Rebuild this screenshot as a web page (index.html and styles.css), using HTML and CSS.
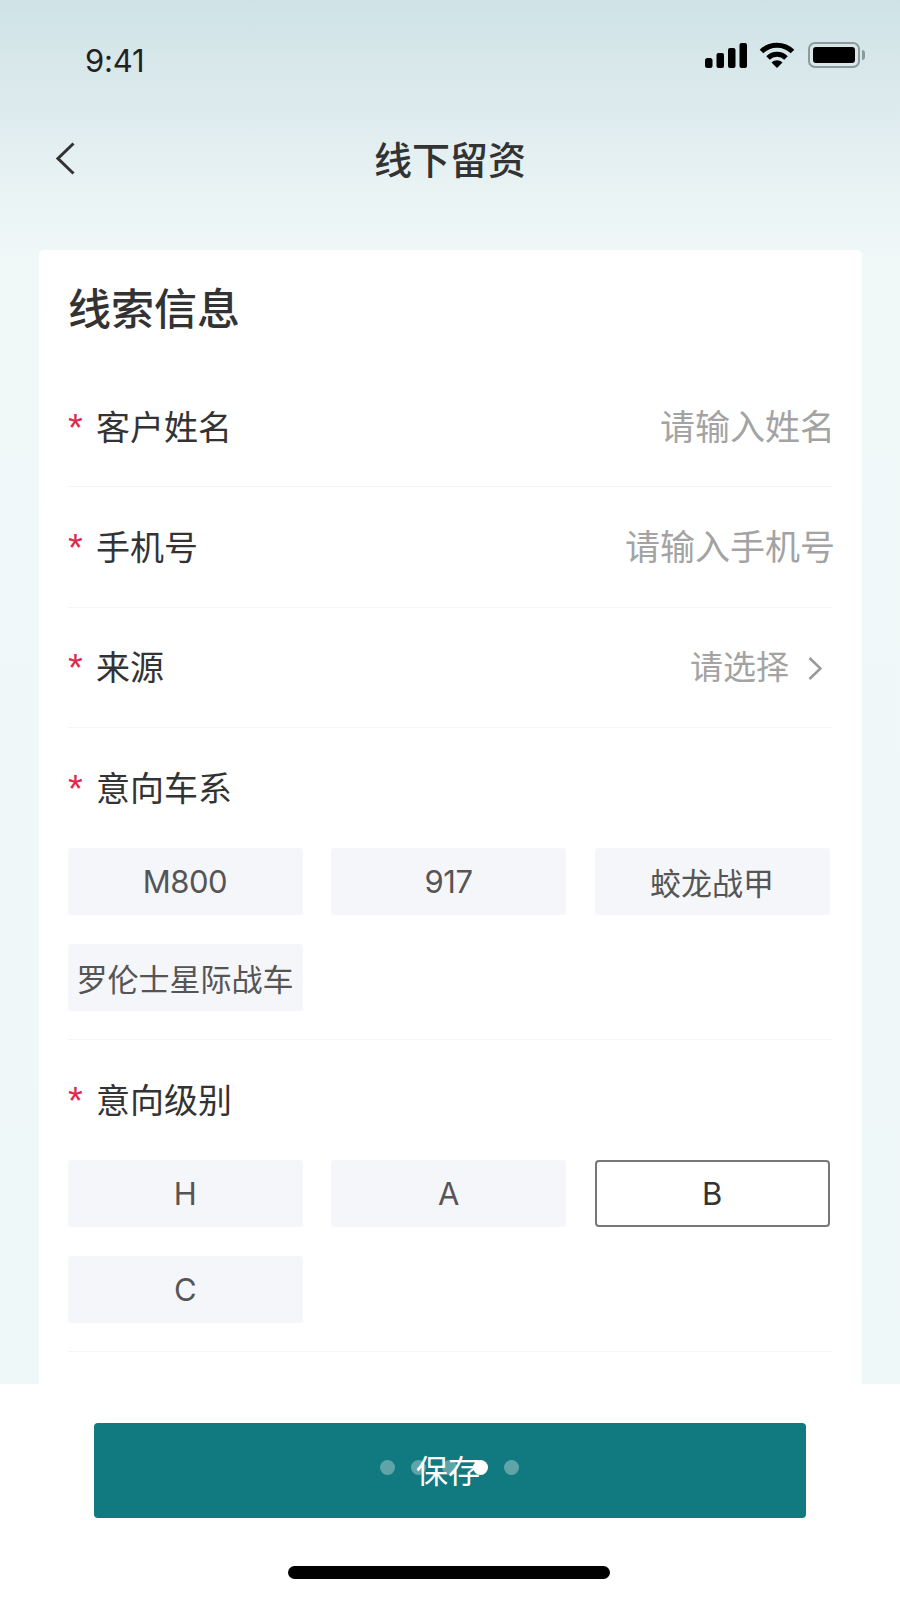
FILE: index.html
```html
<!DOCTYPE html>
<html lang="zh-CN">
<head>
<meta charset="utf-8">
<title>线下留资</title>
<link rel="stylesheet" href="styles.css">
</head>
<body>
<div class="screen">
  <header class="status">
    <span class="time">9:41</span>
    <div class="status-icons">
      <svg class="signal" width="42" height="25" viewBox="0 0 42 25"><rect x="0" y="15" width="7.5" height="10" rx="2.5"/><rect x="11.5" y="10" width="7.5" height="15" rx="2"/><rect x="23" y="5" width="7.5" height="20" rx="2"/><rect x="34.5" y="0" width="7.5" height="25" rx="2"/></svg>
      <svg class="wifi" width="36" height="26" viewBox="0 0 36 26"><path class="arc" d="M2.5 9.5C11 1 25 1 33.5 9.5"/><path class="arc" d="M9 16C14 11 22 11 27 16"/><path d="M12.5 20.5C16 17.5 20 17.5 23.5 20.5L18 26Z"/></svg>
      <div class="battery"><div class="battery-level"></div></div>
      <div class="battery-nub"></div>
    </div>
  </header>
  <nav class="nav">
    <svg class="back" width="19" height="33" viewBox="0 0 19 33"><path d="M17.5 1.5L2 16.5L17.5 31.5"/></svg>
    <h1 class="nav-title">线下留资</h1>
  </nav>
  <main class="main">
    <section class="card">
      <h2 class="card-title">线索信息</h2>
      <div class="row">
        <label class="label"><span class="star">*</span>客户姓名</label>
        <span class="placeholder">请输入姓名</span>
      </div>
      <div class="row">
        <label class="label"><span class="star">*</span>手机号</label>
        <span class="placeholder">请输入手机号</span>
      </div>
      <div class="row">
        <label class="label"><span class="star">*</span>来源</label>
        <span class="placeholder select">请选择<svg class="more" width="14" height="23" viewBox="0 0 14 23"><path d="M1.5 1L12.5 11.5L1.5 22"/></svg></span>
      </div>
      <div class="group">
        <label class="label group-label"><span class="star">*</span>意向车系</label>
        <div class="chips">
          <span class="chip">M800</span>
          <span class="chip">917</span>
          <span class="chip chip-cjk">蛟龙战甲</span>
          <span class="chip chip-cjk">罗伦士星际战车</span>
        </div>
      </div>
      <div class="group">
        <label class="label group-label"><span class="star">*</span>意向级别</label>
        <div class="chips">
          <span class="chip">H</span>
          <span class="chip">A</span>
          <span class="chip chip-active">B</span>
          <span class="chip">C</span>
        </div>
      </div>
    </section>
  </main>
  <footer class="footer">
    <button class="save" type="button">
      <span class="dots"><i class="dot"></i><i class="dot"></i><i class="dot"></i><i class="dot dot-on"></i><i class="dot"></i></span>
      <span class="save-text">保存</span>
    </button>
    <div class="home-bar"></div>
  </footer>
</div>
</body>
</html>
```
FILE: styles.css
```css
* { box-sizing: border-box; }
html, body { margin: 0; padding: 0; }
body {
  font-family: "Liberation Sans", "Noto Sans CJK SC", sans-serif;
  color: #333;
}
.screen {
  width: 900px;
  height: 1600px;
  display: flex;
  flex-direction: column;
  overflow: hidden;
  background: linear-gradient(180deg, #cfe3e7 0, #dbe9ec 90px, #e9f3f4 190px, #f0f8f8 260px, #eff8f8 100%);
}
.status {
  height: 110px;
  flex: none;
  display: flex;
  justify-content: space-between;
  align-items: flex-start;
  padding: 42px 35px 0 85px;
}
.time {
  font-family: Inter, "Liberation Sans", sans-serif;
  font-size: 31px;
  line-height: 38px;
  letter-spacing: -0.2px;
  color: #222;
}
.status-icons {
  display: flex;
  align-items: center;
  height: 26px;
}
.signal { fill: #000; margin-right: 12px; }
.wifi { fill: #000; margin-right: 13px; }
.wifi .arc { fill: none; stroke: #000; stroke-width: 5; }
.battery {
  width: 52px;
  height: 26px;
  border: 2px solid #8c9a9c;
  border-radius: 7px;
  padding: 3px;
}
.battery-level { height: 100%; background: #000; border-radius: 3px; }
.battery-nub {
  width: 3px;
  height: 10px;
  margin-left: 2px;
  background: #8c9a9c;
  border-radius: 0 3px 3px 0;
}
.nav {
  height: 98px;
  flex: none;
  position: relative;
  display: flex;
  align-items: center;
  justify-content: center;
  padding-top: 3px;
}
.back {
  position: absolute;
  left: 56px;
  top: 32px;
  fill: none;
  stroke: #333;
  stroke-width: 3;
}
.nav-title {
  margin: 0;
  font-size: 38px;
  line-height: 50px;
  font-weight: 500;
  color: #333;
}
.main {
  flex: 1;
  min-height: 0;
  overflow: hidden;
  padding: 42px 38px 0 39px;
}
.card {
  background: #fff;
  border-radius: 5px 5px 0 0;
  padding: 0 30px 0 29px;
  height: 100%;
}
.card-title {
  margin: 0;
  height: 117px;
  font-size: 43px;
  line-height: 120px;
  font-weight: 500;
  color: #333;
}
.row {
  height: 120.4px;
  display: flex;
  justify-content: space-between;
  align-items: center;
  padding-top: 2px;
  border-bottom: 1.5px solid #f3f4f5;
}
.label {
  display: flex;
  align-items: center;
  font-size: 34px;
  line-height: 46px;
  color: #333;
}
.star {
  width: 28px;
  font-size: 38px;
  line-height: 46px;
  color: #e0284f;
}
.placeholder {
  display: flex;
  align-items: center;
  margin-right: -3px;
  font-size: 35px;
  line-height: 46px;
  color: #a3a3a3;
}
.select { margin-right: 0; padding-right: 10px; font-size: 33px; }
.more {
  margin-left: 19px;
  fill: none;
  stroke: #999;
  stroke-width: 2.5;
}
.group {
  padding-bottom: 28px;
  border-bottom: 1.5px solid #f3f4f5;
}
.group-label { height: 120px; padding-top: 2px; }
.chips {
  display: grid;
  grid-template-columns: repeat(3, 235px);
  grid-auto-rows: 67px;
  column-gap: 28.5px;
  row-gap: 29px;
  margin-left: -0.5px;
}
.chip {
  display: flex;
  align-items: center;
  justify-content: center;
  background: #f5f6fa;
  border-radius: 3px;
  font-family: Inter, "Noto Sans CJK SC", sans-serif;
  font-size: 31px;
  letter-spacing: -0.5px;
  color: #555;
  white-space: nowrap;
}
.chip-cjk { letter-spacing: 0; }
.chip-active {
  background: #fff;
  border: 2px solid #777;
  border-radius: 4px;
  color: #333;
}
.footer {
  height: 216px;
  flex: none;
  background: #fff;
  display: flex;
  flex-direction: column;
  align-items: center;
  padding-top: 39px;
}
.save {
  position: relative;
  width: 712px;
  height: 95px;
  flex: none;
  border: 0;
  border-radius: 4px;
  background: #107a80;
  color: #fff;
  font-family: inherit;
  font-size: 32px;
  padding: 0;
}
.save-text { position: relative; top: -2px; left: -2px; }
.dots {
  position: absolute;
  left: 286px;
  top: 37px;
  display: flex;
  gap: 16px;
}
.dot {
  display: block;
  width: 15px;
  height: 15px;
  border-radius: 50%;
  background: #5fa5a8;
}
.dot-on { background: #fff; }
.home-bar {
  width: 322px;
  height: 13px;
  margin-top: 48px;
  margin-right: 2px;
  background: #000;
  border-radius: 7px;
}
```
